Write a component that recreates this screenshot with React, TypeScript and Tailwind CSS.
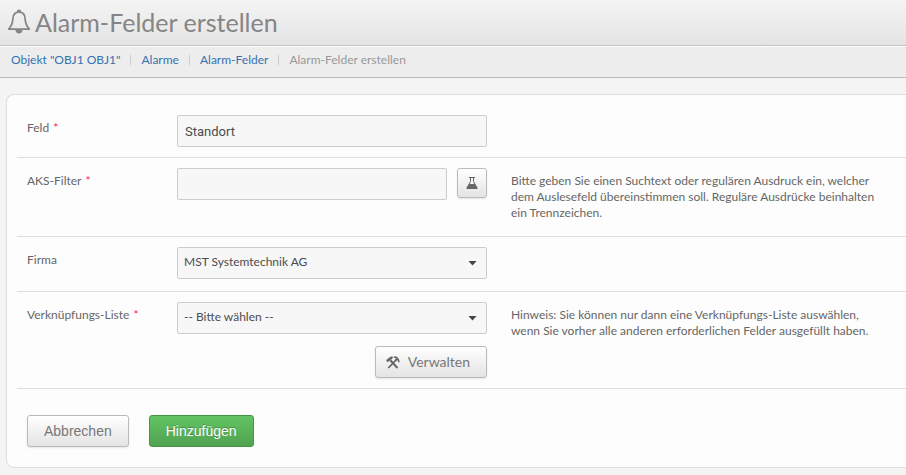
import { useState, type ReactNode } from "react";

const crumbs = ['Objekt "OBJ1 OBJ1"', "Alarme", "Alarm-Felder"];

const fieldClass =
    "h-8 w-full rounded-xs border border-[#cccccc] bg-[#f7f7f7] text-[#4c4c4c] outline-none";

const buttonClass =
    "flex items-center justify-center rounded-[3px] border border-[#bbbbbb] bg-linear-to-b from-white to-[#e4e4e4] text-[#777777] shadow-[0_1px_2px_rgba(0,0,0,0.1)]";

function BellIcon() {
    return (
        <svg width="24" height="26" viewBox="0 0 24 26" fill="none" stroke="#858585" strokeWidth="1.7" strokeLinejoin="round" aria-hidden="true">
            <path d="M12 3.2c-4 0-5.9 2.7-6.1 6.4-.2 5-1.2 7.200-4.3 10.6h20.8c-3.1-3.4-4.1-5.6-4.3-10.6-.2-3.7-2.1-6.4-6.1-6.4z" />
            <path d="M10.6 2.9c0-2 2.8-2 2.8 0" />
            <path d="M8.5 21h7c0 2-1.500 3.600-3.500 3.600s-3.500-1.600-3.500-3.600z" fill="#858585" stroke="none" />
        </svg>
    );
}

function FlaskIcon() {
    return (
        <svg width="12" height="12" viewBox="0 0 12 12" aria-hidden="true">
            <path d="M3 .5h6" stroke="#666666" strokeWidth="1" />
            <path d="M4.5 .5v4L1 11h10L7.5 4.5v-4" fill="none" stroke="#666666" strokeWidth="1" />
            <path d="M3 7h6l2.800 5H.2z" fill="#666666" />
        </svg>
    );
}

function ToolsIcon() {
    return (
        <svg width="14" height="13" viewBox="0 0 14 13" fill="none" stroke="#666666" aria-hidden="true">
            <path d="M4.3 4.3L11.5 12" strokeWidth="2" />
            <path d="M.8 5.2L5.8 1.4" strokeWidth="2.6" />
            <path d="M5 1.2h2.5" strokeWidth="1" />
            <path d="M2.3 12L10 4" strokeWidth="1.8" />
            <path d="M8.2 1.2c2.200-.3 4.600 1.600 4.700 5" strokeWidth="1.6" />
            <path d="M9.5 4.5l2-2" strokeWidth="2.2" />
        </svg>
    );
}

function Required() {
    return <span className="ml-1 text-[#ff2244]">*</span>;
}

type RowProps = {
    id: string;
    label: string;
    required?: boolean;
    help?: string;
    className: string;
    children: ReactNode;
};

function FormRow({ id, label, required, help, className, children }: RowProps) {
    return (
        <div className={`flex items-start border-b border-[#dddddd] pl-2.5 ${className}`}>
            <label htmlFor={id} className="mt-[5px] w-[150px] shrink-0">
                {label}
                {required && <Required />}
            </label>
            <div className="w-[310px] shrink-0">{children}</div>
            {help && <p className="mt-[5px] ml-6 max-w-[376px]">{help}</p>}
        </div>
    );
}

type SelectProps = {
    id: string;
    options: string[];
};

function SelectBox({ id, options }: SelectProps) {
    return (
        <div className="relative">
            <select id={id} className={`${fieldClass} appearance-none pr-8 pb-0.5 pl-1.5`}>
                {options.map((option) => (
                    <option key={option}>{option}</option>
                ))}
            </select>
            <svg className="pointer-events-none absolute top-3.5 right-2.5" width="9" height="5" viewBox="0 0 9 5" aria-hidden="true">
                <path d="M.5 0h8L4.5 4.5z" fill="#444444" />
            </svg>
        </div>
    );
}

export default function App() {
    const [field, setField] = useState("Standort");
    const [filter, setFilter] = useState("");

    return (
        <div className="min-h-screen bg-[#f4f4f4] pb-[7px] font-['Lato','Open_Sans',sans-serif] text-[12px] leading-4 text-[#666666]">
            <header className="flex h-[46px] items-center gap-1 border-b border-[#c4c4c4] bg-linear-to-b from-[#f4f4f4] to-[#e4e4e4] pb-0.5 pl-[7px]">
                <BellIcon />
                <h1 className="text-[25px] leading-8 text-[#858585]">Alarm-Felder erstellen</h1>
            </header>

            <nav className="flex h-8 items-center border-t border-b border-t-white border-b-[#bbbbbb] bg-[#ededed] pb-1 pl-[11px]">
                {crumbs.map((crumb) => (
                    <span key={crumb} className="flex items-center">
                        <a href="#" className="text-[#3572b0]">{crumb}</a>
                        <span className="mx-2.5 h-2.5 w-px bg-[#cccccc]" />
                    </span>
                ))}
                <span className="text-[#999999]">Alarm-Felder erstellen</span>
            </nav>

            <form
                onSubmit={(e) => e.preventDefault()}
                className="mt-4 ml-1.5 rounded-l-lg border border-r-0 border-[#dddddd] bg-[#fdfdfd] pt-2.5 pb-5 pl-2.5"
            >
                <FormRow id="field" label="Feld" required className="py-2.5">
                    <input
                        id="field"
                        value={field}
                        onChange={(e) => setField(e.target.value)}
                        className={`${fieldClass} px-[7px] font-[Roboto,sans-serif] text-[13px]`}
                    />
                </FormRow>

                <FormRow
                    id="filter"
                    label="AKS-Filter"
                    required
                    help="Bitte geben Sie einen Suchtext oder regulären Ausdruck ein, welcher dem Auslesefeld übereinstimmen soll. Reguläre Ausdrücke beinhalten ein Trennzeichen."
                    className="pt-2.5 pb-[15px]"
                >
                    <div className="flex gap-2.5">
                        <input
                            id="filter"
                            value={filter}
                            onChange={(e) => setFilter(e.target.value)}
                            className={`${fieldClass} px-[7px] font-[Roboto,sans-serif] text-[13px]`}
                        />
                        <button type="button" aria-label="Filter testen" className={`${buttonClass} h-[30px] w-[30px] shrink-0`}>
                            <FlaskIcon />
                        </button>
                    </div>
                </FormRow>

                <FormRow id="company" label="Firma" className="pt-2.5 pb-3">
                    <SelectBox id="company" options={["MST Systemtechnik AG"]} />
                </FormRow>

                <FormRow
                    id="list"
                    label="Verknüpfungs-Liste"
                    required
                    help="Hinweis: Sie können nur dann eine Verknüpfungs-Liste auswählen, wenn Sie vorher alle anderen erforderlichen Felder ausgefüllt haben."
                    className="py-2.5"
                >
                    <SelectBox id="list" options={["-- Bitte wählen --"]} />
                    <button type="button" className={`${buttonClass} mt-3 ml-auto h-8 gap-2 pr-4 pl-2.5 text-[14px]`}>
                        <ToolsIcon />
                        Verwalten
                    </button>
                </FormRow>

                <div className="mt-[26px] flex gap-5 pl-2.5 font-['Liberation_Sans',Arial,sans-serif] text-[14px]">
                    <button type="button" className={`${buttonClass} h-8 px-4`}>
                        Abbrechen
                    </button>
                    <button
                        type="submit"
                        className="h-8 rounded-[3px] border border-[#469446] bg-linear-to-b from-[#62c462] to-[#51a351] px-4 text-white [text-shadow:0_-1px_0_rgba(0,0,0,0.25)]"
                    >
                        Hinzufügen
                    </button>
                </div>
            </form>
        </div>
    );
}
